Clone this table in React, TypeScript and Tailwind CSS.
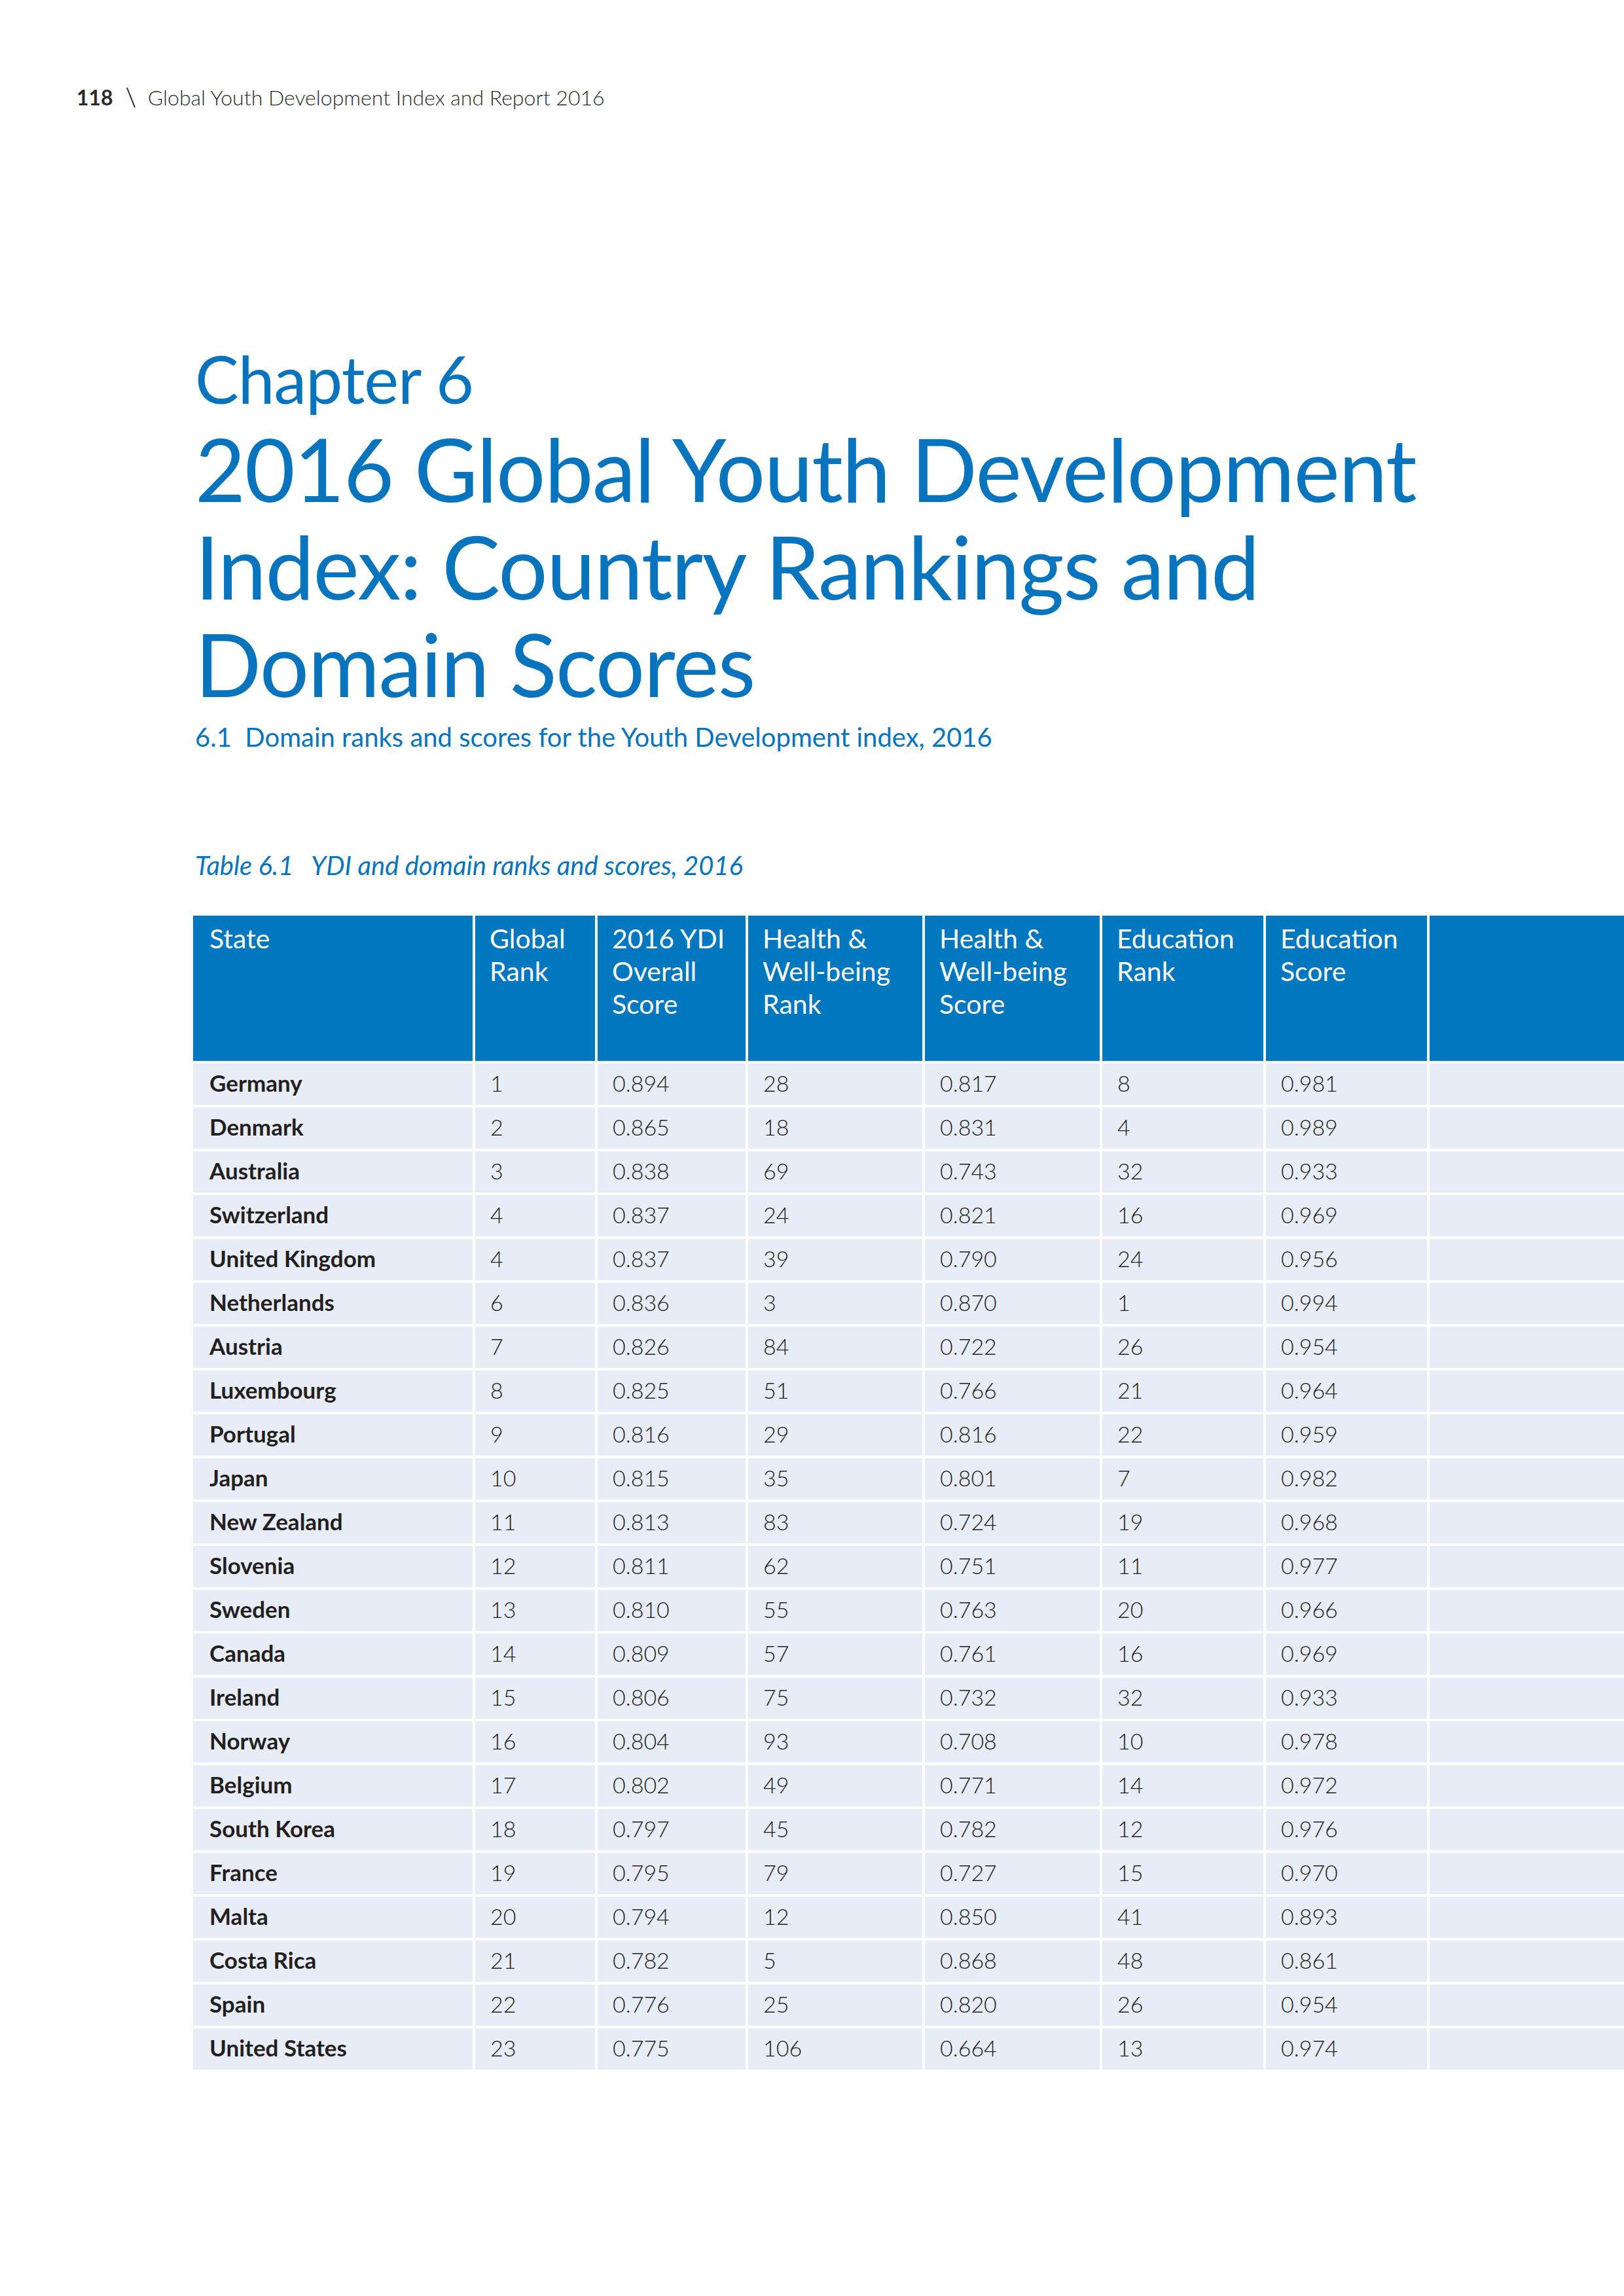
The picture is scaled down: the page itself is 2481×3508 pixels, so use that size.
const rows: [string, string, string, string, string, string, string][] = [
  ["Germany", "1", "0.894", "28", "0.817", "8", "0.981"],
  ["Denmark", "2", "0.865", "18", "0.831", "4", "0.989"],
  ["Australia", "3", "0.838", "69", "0.743", "32", "0.933"],
  ["Switzerland", "4", "0.837", "24", "0.821", "16", "0.969"],
  ["United Kingdom", "4", "0.837", "39", "0.790", "24", "0.956"],
  ["Netherlands", "6", "0.836", "3", "0.870", "1", "0.994"],
  ["Austria", "7", "0.826", "84", "0.722", "26", "0.954"],
  ["Luxembourg", "8", "0.825", "51", "0.766", "21", "0.964"],
  ["Portugal", "9", "0.816", "29", "0.816", "22", "0.959"],
  ["Japan", "10", "0.815", "35", "0.801", "7", "0.982"],
  ["New Zealand", "11", "0.813", "83", "0.724", "19", "0.968"],
  ["Slovenia", "12", "0.811", "62", "0.751", "11", "0.977"],
  ["Sweden", "13", "0.810", "55", "0.763", "20", "0.966"],
  ["Canada", "14", "0.809", "57", "0.761", "16", "0.969"],
  ["Ireland", "15", "0.806", "75", "0.732", "32", "0.933"],
  ["Norway", "16", "0.804", "93", "0.708", "10", "0.978"],
  ["Belgium", "17", "0.802", "49", "0.771", "14", "0.972"],
  ["South Korea", "18", "0.797", "45", "0.782", "12", "0.976"],
  ["France", "19", "0.795", "79", "0.727", "15", "0.970"],
  ["Malta", "20", "0.794", "12", "0.850", "41", "0.893"],
  ["Costa Rica", "21", "0.782", "5", "0.868", "48", "0.861"],
  ["Spain", "22", "0.776", "25", "0.820", "26", "0.954"],
  ["United States", "23", "0.775", "106", "0.664", "13", "0.974"],
];

const headers: string[][] = [
  ["State"],
  ["Global", "Rank"],
  ["2016 YDI", "Overall", "Score"],
  ["Health &", "Well-being", "Rank"],
  ["Health &", "Well-being", "Score"],
  ["Education", "Rank"],
  ["Education", "Score"],
  [],
];

export default function App() {
  return (
    <div className="relative min-h-[3508px] w-[2481px] overflow-hidden bg-white font-['Lato','Liberation_Sans',sans-serif]">
      {/* running header */}
      <div className="flex items-center pl-[117px] pt-[129px] text-[32px] leading-[40px] text-[#2b2b2b]">
        <span className="font-bold">118</span>
        <svg width="16" height="32" viewBox="0 0 16 32" className="ml-[19px] mr-[18px]">
          <line x1="2" y1="1" x2="14" y2="31" stroke="#2b2b2b" strokeWidth="2" />
        </svg>
        <span className="font-light">Global Youth Development Index and Report 2016</span>
      </div>

      <div className="pl-[298px] text-[#0874bd]">
        <h2 className="mt-[354px] text-[100px] leading-[110px] font-normal tracking-[-1px]">Chapter 6</h2>
        <h1 className="mt-[8px] text-[133px] leading-[149px] font-normal tracking-[-1.5px]">
          2016 Global Youth Development
          <br />
          Index: Country Rankings and
          <br />
          Domain Scores
        </h1>
        <p className="mt-[15px] text-[40px] leading-[46px]">
          6.1&nbsp;&nbsp;Domain ranks and scores for the Youth Development index, 2016
        </p>
        <p className="mt-[150px] text-[40px] leading-[46px] italic">
          Table 6.1&nbsp;&nbsp;&nbsp;YDI and domain ranks and scores, 2016
        </p>
      </div>

      <div className="ml-[295px] mt-[54px] grid grid-cols-[427px_183px_226px_266px_267px_246px_246px_297px] gap-[4px]">
        {headers.map((h, i) => (
          <div
            key={i}
            className={`h-[222px] bg-[#0077bf] pt-[10px] text-[41px] leading-[50px] text-white ${i === 0 ? "pl-[25px]" : "pl-[22px]"}`}
          >
            {h.map((line) => (
              <div key={line}>{line}</div>
            ))}
          </div>
        ))}
        {rows.map((r) =>
          [...r, ""].map((cell, ci) => (
            <div
              key={r[0] + ci}
              className={`flex h-[63px] items-center bg-[#e8ecf6] pb-[4px] text-[#231f20] ${
                ci === 0 ? "pl-[25px] text-[35px] font-bold" : "pl-[23px] text-[34px] font-light"
              }`}
            >
              {cell}
            </div>
          ))
        )}
      </div>
    </div>
  );
}
